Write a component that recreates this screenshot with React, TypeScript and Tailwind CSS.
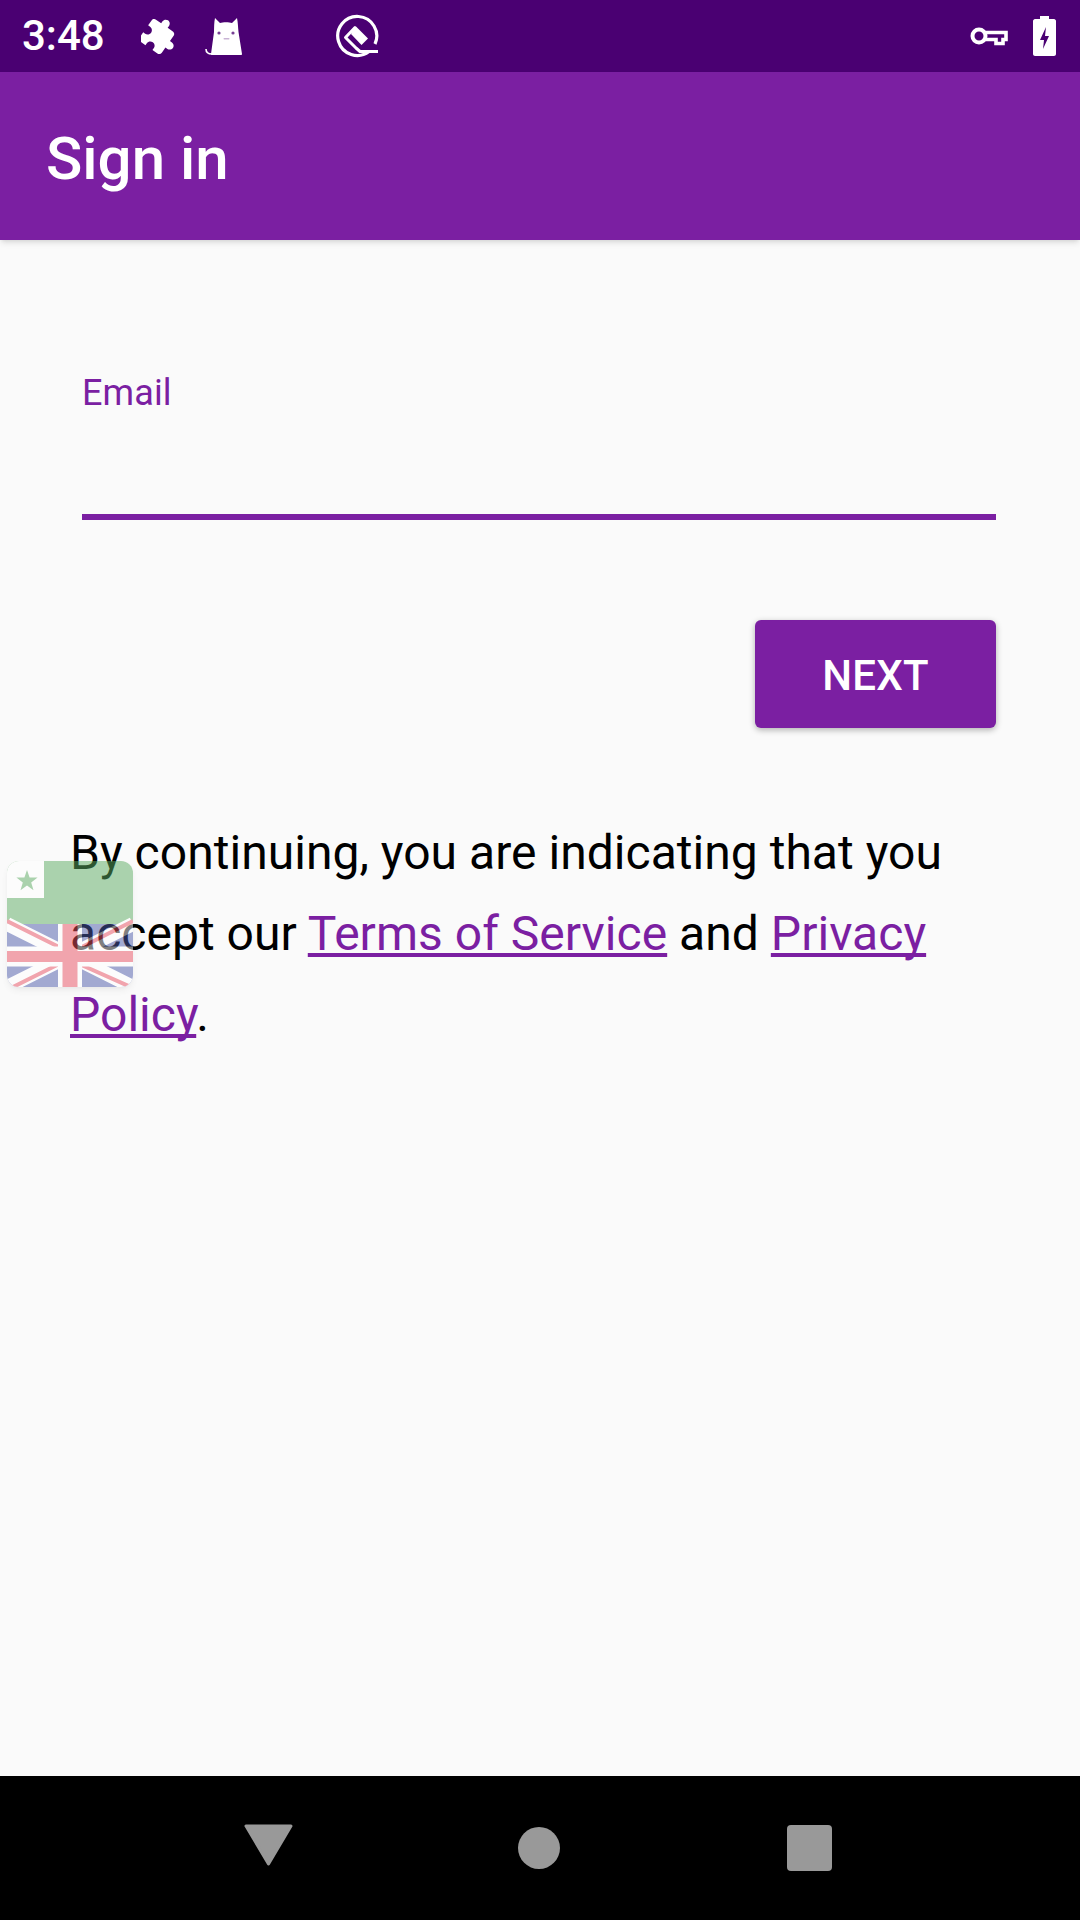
import React from 'react';

const font = { fontFamily: 'Roboto, sans-serif' };

function StatusBar(): React.ReactElement {
  return (
    <div className="flex h-[72px] shrink-0 items-center bg-[#4a0072] text-white">
      <span className="ml-[22px] w-[82px] text-[42px] font-medium leading-none">3:48</span>
      <svg className="ml-[37px] h-[38px] w-[38px]" viewBox="0 0 24 24" fill="#fff">
        <path
          transform="rotate(35 12 12)"
          d="M20.5 11H19V7c0-1.1-.9-2-2-2h-4V3.5C13 2.12 11.88 1 10.5 1S8 2.12 8 3.5V5H4c-1.1 0-1.99.9-1.99 2v3.8H3.5c1.49 0 2.7 1.21 2.7 2.7s-1.21 2.7-2.7 2.7H2V20c0 1.1.9 2 2 2h3.8v-1.5c0-1.49 1.21-2.7 2.7-2.7 1.49 0 2.7 1.21 2.7 2.7V22H17c1.1 0 2-.9 2-2v-4h1.5c1.38 0 2.5-1.12 2.5-2.5S21.88 11 20.5 11z"
        />
      </svg>
      <svg className="ml-[25px] h-[40px] w-[40px]" viewBox="0 0 40 40">
        <path d="M11 2l5 5c3-1 9-1 12 0l5-5c1 5 1 9 1.500 14l3.500 22c0 .6-.4 1-1 1H8c-.6 0-1-.4-1-1l3-22c.2-5 0-9 1-14z" fill="#fff" />
        <path d="M8 38c-4 0-6-1-6-5" fill="none" stroke="#fff" strokeWidth="1.6" />
        <circle cx="15" cy="17" r="1.6" fill="#4a0072" opacity=".75" />
        <circle cx="29" cy="17" r="1.6" fill="#4a0072" opacity=".75" />
        <rect x="19.500" y="22" width="6" height="1.500" rx=".7" fill="#4a0072" opacity=".3" />
      </svg>
      <svg className="ml-[92px] h-[44px] w-[44px]" viewBox="0 0 44 44" fill="none" stroke="#fff">
        <path d="M33 37.500A19.500 19.500 0 1 1 39 30" strokeWidth="3.200" />
        <path d="M19.500 13L9.500 23.500 20 34l4 3.500h18" strokeWidth="3" strokeLinejoin="round" />
        <path d="M19.500 12L32 24.500 25.500 31 15 20z" fill="#fff" stroke="none" />
      </svg>
      <div className="ml-auto mr-[24px] flex items-center gap-[25px]">
        <svg className="h-[20px] w-[38px]" viewBox="0 0 38 20" fill="none" stroke="#fff" strokeWidth="4">
          <circle cx="9" cy="10" r="6.500" />
          <path d="M15 6.500h21v7h-3v4h-7v-4H15" strokeLinejoin="miter" strokeWidth="3.600" />
        </svg>
        <svg className="h-[40px] w-[23px]" viewBox="0 0 23 40">
          <path d="M7 0h9v3h5c1 0 2 1 2 2v33c0 1-1 2-2 2H2c-1 0-2-1-2-2V5c0-1 1-2 2-2h5z" fill="#fff" />
          <path d="M13 11l-6 13h4l-1 9 6-13h-4z" fill="#4a0072" />
        </svg>
      </div>
    </div>
  );
}

function FlagBadge(): React.ReactElement {
  return (
    <div className="absolute left-[7px] top-[861px] h-[126px] w-[126px] overflow-hidden rounded-[12px] opacity-50 shadow-md">
      <svg className="block h-full w-full" viewBox="0 0 126 126">
        <rect width="126" height="63" fill="#5cac62" />
        <rect width="37" height="37" fill="#fff" />
        <path d="M20 9l2.600 7.600h8l-6.400 4.900 2.300 7.700-6.500-4.600-6.500 4.600 2.300-7.700-6.400-4.900h8z" fill="#5cac62" />
        <rect y="63" width="126" height="63" fill="#4c5aaa" />
        <path d="M0 63L126 126M126 63L0 126" stroke="#fff" strokeWidth="14" />
        <path d="M0 60l60 30M126 60L67 90M0 129l56-28M70 102l56 25" stroke="#ea5062" strokeWidth="4" />
        <path d="M63 63v63" stroke="#fff" strokeWidth="24" />
        <path d="M0 95.500h126" stroke="#fff" strokeWidth="20" />
        <path d="M63 63v63" stroke="#ea5062" strokeWidth="15" />
        <path d="M0 95.500h126" stroke="#ea5062" strokeWidth="11" />
      </svg>
    </div>
  );
}

function NavBar(): React.ReactElement {
  return (
    <div className="relative h-[144px] shrink-0 bg-black">
      <svg className="absolute left-[244px] top-[48px] h-[42px] w-[49px]" viewBox="0 0 49 42">
        <path d="M2 2h45L24.500 40z" fill="#999" stroke="#999" strokeWidth="3" strokeLinejoin="round" />
      </svg>
      <div className="absolute left-[518px] top-[51px] h-[42px] w-[42px] rounded-full bg-[#999]" />
      <div className="absolute left-[787px] top-[49px] h-[46px] w-[45px] rounded-[4px] bg-[#999]" />
    </div>
  );
}

export default function App(): React.ReactElement {
  return (
    <div className="relative flex h-[1920px] w-[1080px] flex-col overflow-hidden bg-[#fafafa]" style={font}>
      <StatusBar />
      <header className="flex h-[168px] shrink-0 items-center bg-[#7b1fa2] pl-[46px] pt-[5px] shadow-md">
        <h1 className="text-[60px] font-medium leading-none text-white">Sign in</h1>
      </header>
      <main className="flex-1">
        <div className="ml-[82px] mr-[84px] mt-[132px]">
          <label className="block text-[36px] leading-[42px] tracking-[0.1px] text-[#7b1fa2]">Email</label>
          <div className="mt-[100px] h-[6px] bg-[#7b1fa2]" />
          <div className="mt-[100px] flex justify-end">
            <button className="h-[108px] w-[241px] rounded-[6px] bg-[#7b1fa2] pt-[2px] text-[42px] font-medium tracking-[0.2px] text-white shadow-[0_2px_6px_rgba(0,0,0,0.3)]">
              NEXT
            </button>
          </div>
        </div>
        <p className="ml-[70px] mr-[71px] mt-[84px] text-[48px] leading-[81px] tracking-[0.03px] text-black">
          By continuing, you are indicating that you accept our{' '}
          <a className="text-[#7b1fa2] underline [text-decoration-skip-ink:none]">Terms of Service</a> and{' '}
          <a className="text-[#7b1fa2] underline [text-decoration-skip-ink:none]">Privacy Policy</a>.
        </p>
      </main>
      <NavBar />
      <FlagBadge />
    </div>
  );
}
